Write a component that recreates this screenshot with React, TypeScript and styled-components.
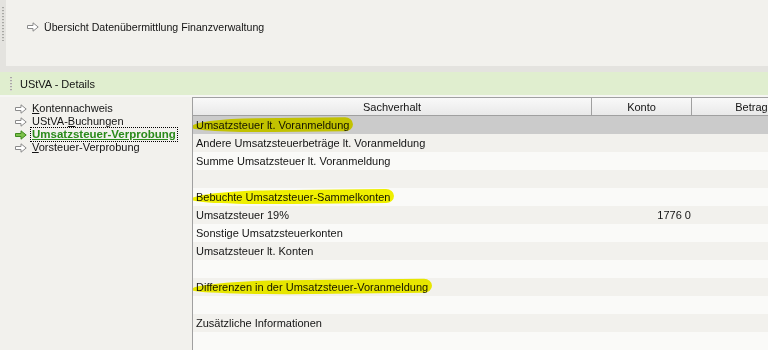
import styled, { createGlobalStyle } from 'styled-components'

const GlobalStyle = createGlobalStyle`
	html, body {
		margin: 0;
		padding: 0;
		background: #f2f1ed;
		font-family: 'Liberation Sans', Arial, sans-serif;
		font-size: 11px;
		color: #000;
		overflow: hidden;
	}
`

type Row = {
	label?: string
	konto?: string
	mark?: boolean
}

const rows: Row[] = [
	{ label: 'Umsatzsteuer lt. Voranmeldung', mark: true },
	{ label: 'Andere Umsatzsteuerbeträge lt. Voranmeldung' },
	{ label: 'Summe Umsatzsteuer lt. Voranmeldung' },
	{},
	{ label: 'Bebuchte Umsatzsteuer-Sammelkonten', mark: true },
	{ label: 'Umsatzsteuer 19%', konto: '1776 0' },
	{ label: 'Sonstige Umsatzsteuerkonten' },
	{ label: 'Umsatzsteuer lt. Konten' },
	{},
	{ label: 'Differenzen in der Umsatzsteuer-Voranmeldung', mark: true },
	{},
	{ label: 'Zusätzliche Informationen' },
	{},
]

const navItems = [
	{ key: 'K', rest: 'ontennachweis' },
	{ key: '', rest: 'UStVA-', key2: 'B', rest2: 'uchungen' },
	{ key: 'U', rest: 'msatzsteuer-Verprobung', active: true },
	{ key: 'V', rest: 'orsteuer-Verprobung' },
]

function ArrowIcon({ active = false }: { active?: boolean }) {
	return (
		<svg width='12' height='10' viewBox='0 0 12 10' aria-hidden>
			<path
				d='M0.5 3.5 H6 V0.8 L11.2 5 L6 9.2 V6.5 H0.5 Z'
				fill={active ? '#7cc04a' : '#ffffff'}
				stroke={active ? '#3d8a1e' : '#8a8a8a'}
				strokeWidth='1'
			/>
		</svg>
	)
}

export default function App() {
	return (
		<>
			<GlobalStyle />
			<Screen>
				<TopPanel>
					<SideGrip>
						<Dots $height={34} />
					</SideGrip>
					<TopContent>
						<TitleLink>
							<ArrowIcon />
							<span>Übersicht Datenübermittlung Finanzverwaltung</span>
						</TitleLink>
					</TopContent>
				</TopPanel>
				<SplitBand />
				<SectionHeader>
					<Dots $height={14} />
					<SectionTitle>UStVA - Details</SectionTitle>
				</SectionHeader>
				<HeaderGap />
				<Body>
					<Nav>
						{navItems.map((item, i) => (
							<NavItem key={i}>
								<ArrowIcon active={item.active} />
								<NavLabel $active={!!item.active}>
									{item.key && <u>{item.key}</u>}
									{item.rest}
									{item.key2 && <u>{item.key2}</u>}
									{item.rest2}
								</NavLabel>
							</NavItem>
						))}
					</Nav>
					<Table>
						<HeadRow>
							<HeadCell>Sachverhalt</HeadCell>
							<HeadCell>Konto</HeadCell>
							<HeadCell>Betrag</HeadCell>
						</HeadRow>
						{rows.map((row, i) => (
							<DataRow key={i} $selected={i === 0} $odd={i % 2 === 1}>
								<Cell>
									{row.mark ? <Mark>{row.label}</Mark> : row.label}
								</Cell>
								<NumCell>{row.konto}</NumCell>
								<NumCell />
							</DataRow>
						))}
					</Table>
				</Body>
			</Screen>
		</>
	)
}

const Screen = styled.div`
	width: 768px;
	height: 350px;
	display: flex;
	flex-direction: column;
	overflow: hidden;
`

const TopPanel = styled.div`
	height: 66px;
	display: flex;
	background: #f2f1ed;
`

const SideGrip = styled.div`
	width: 6px;
	background: #e4e3df;
	display: flex;
	justify-content: center;
	padding-top: 7px;
	box-sizing: border-box;
`

const Dots = styled.div<{ $height: number }>`
	width: 2px;
	height: ${(p) => p.$height}px;
	background-image: repeating-linear-gradient(
		to bottom,
		#a8a8a4 0 1px,
		#d8d7d3 1px 2px,
		transparent 2px 3px
	);
`

const TopContent = styled.div`
	flex: 1;
	padding: 20px 0 0 21px;
`

const TitleLink = styled.div`
	display: flex;
	align-items: center;
	gap: 5px;
	height: 14px;
	font-size: 10.6px;
	color: #141414;
`

const SplitBand = styled.div`
	height: 6px;
	background: #e4e3df;
`

const SectionHeader = styled.div`
	height: 23px;
	display: flex;
	align-items: center;
	gap: 8px;
	padding-left: 10px;
	background: #e0eecf;
`

const SectionTitle = styled.span`
	color: #141414;
`

const HeaderGap = styled.div`
	height: 2px;
	background: #f6f6f3;
`

const Body = styled.div`
	flex: 1;
	display: grid;
	grid-template-columns: 192px 1fr;
	min-height: 0;
`

const Nav = styled.div`
	display: flex;
	flex-direction: column;
	padding: 5px 0 0 15px;
`

const NavItem = styled.div`
	display: flex;
	align-items: center;
	gap: 4px;
	height: 13px;
`

const NavLabel = styled.span<{ $active: boolean }>`
	padding: 0 1px;
	line-height: 13px;
	font-size: ${(p) => (p.$active ? '11.5px' : '11px')};
	color: ${(p) => (p.$active ? '#2a8a1a' : '#141414')};
	font-weight: ${(p) => (p.$active ? 700 : 400)};
	text-decoration: ${(p) => (p.$active ? 'underline' : 'none')};
	outline: ${(p) => (p.$active ? '1px dotted #000' : 'none')};
`

const Table = styled.div`
	border-left: 1px solid #a0a0a0;
	border-top: 1px solid #a0a0a0;
	display: flex;
	flex-direction: column;
	overflow: hidden;
`

const columns = '399px 100px 120px'

const HeadRow = styled.div`
	display: grid;
	grid-template-columns: ${columns};
	height: 19px;
	border-bottom: 1px solid #a0a0a0;
	background: linear-gradient(to bottom, #f9f9f9, #e9e9e9);
`

const HeadCell = styled.div`
	display: flex;
	align-items: center;
	justify-content: center;
	border-right: 1px solid #a0a0a0;
	color: #141414;
`

const DataRow = styled.div<{ $selected: boolean; $odd: boolean }>`
	display: grid;
	grid-template-columns: ${columns};
	height: 18px;
	flex-shrink: 0;
	background: ${(p) =>
		p.$selected ? '#cbcbcb' : p.$odd ? '#f2f1ed' : '#fafaf8'};
`

const Cell = styled.div`
	display: flex;
	align-items: center;
	padding-left: 3px;
	white-space: nowrap;
	color: #141414;
`

const NumCell = styled.div`
	display: flex;
	align-items: center;
	justify-content: flex-end;
	padding-right: 1px;
	color: #141414;
`

const Mark = styled.span`
	position: relative;

	&::before {
		content: '';
		position: absolute;
		left: -5px;
		right: -4px;
		top: -1px;
		bottom: -1px;
		background: #f4f400;
		border-radius: 40% 8px 8px 50% / 60% 50% 50% 40%;
		transform: rotate(-0.6deg);
		mix-blend-mode: multiply;
	}
`
